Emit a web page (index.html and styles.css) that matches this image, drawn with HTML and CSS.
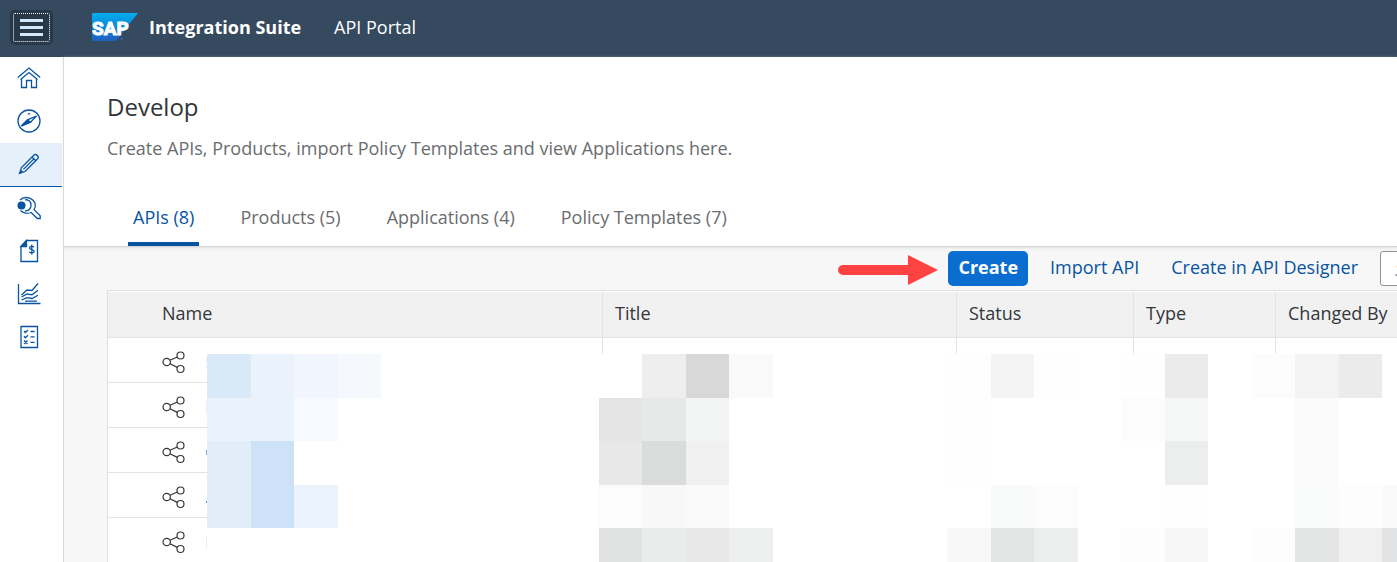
FILE: index.html
```
<!DOCTYPE html>
<html lang="en">
<head>
<meta charset="utf-8">
<title>Integration Suite - API Portal</title>
<link rel="stylesheet" href="styles.css">
</head>
<body>
<header class="shell">
  <button class="menu-button" type="button" aria-label="Menu"><span class="menu-bars"></span></button>
  <svg class="logo" viewBox="0 0 46 28" role="img" aria-label="SAP">
    <defs><linearGradient id="sap" x1="0" y1="0" x2="0" y2="1"><stop offset="0" stop-color="#00aeef"/><stop offset="1" stop-color="#1f5fbf"/></linearGradient></defs>
    <path fill="url(#sap)" d="M0 0h46L24 28H0z"/>
    <text class="logo-text" x="0" y="22">SAP</text>
    <circle cx="30" cy="26" r="1.500" fill="#2a62a8"/>
  </svg>
  <span class="product">Integration Suite</span>
  <span class="area">API Portal</span>
</header>
<div class="layout">
  <nav class="side" aria-label="Main">
    <a class="side-item" href="#home" aria-label="Home"><svg class="icon" viewBox="0 0 24 24"><path d="M.8 11.500 12 2l11.200 9.500M3.500 13.500 12 6.500l8.500 7M4.500 13v8.500H9.500V14.500h5v7h5V13"/></svg></a>
    <a class="side-item" href="#discover" aria-label="Discover"><svg class="icon" viewBox="0 0 24 24"><circle cx="12" cy="12" r="11"/><path d="M19.500 7 13.500 13.200 4.500 17 10.500 10.800z"/><path class="solid" d="M4.500 17 10.500 10.800l3 2.400z"/><path class="dot" d="m12 3.500 1.500 2h-3z"/></svg></a>
    <a class="side-item side-item-on" href="#develop" aria-label="Develop"><svg class="icon" viewBox="0 0 24 24"><path d="M2.500 21.500 4.500 15.500 17 3q1.500-1.200 3.300.4t.4 3.300L8.300 19.300zM15 5l3.800 3.800M6.400 17.400 16.900 6.900"/><path class="dot" d="m2.500 21.500 1.200-4 2.800 2.800z"/></svg></a>
    <a class="side-item" href="#configure" aria-label="Configure"><svg class="icon" viewBox="0 0 24 24"><path d="M3 4C6 .8 12 .5 15.800 4c3 3 3 6.700 1.200 9.500l6.200 6.200V22.500h-3l-6-6C10.500 18 6 17 3.500 14.500M8 3.800c4-.5 6 2 6 5.500s-2.500 6-6 5.500"/><circle class="dot" cx="4.500" cy="9.500" r="4"/></svg></a>
    <a class="side-item" href="#monetize" aria-label="Monetize"><svg class="icon" viewBox="0 0 24 24"><path d="M9.500 1.500H20.500v21H4V7.500z"/><path class="solid" d="M9.500 1.500v6H4z"/><path d="M17 8c-1-1-4.500-1-4.500 1s4.700 1.200 4.700 3.200-3.700 2-4.900.8M14.800 5.500v10"/></svg></a>
    <a class="side-item" href="#analyze" aria-label="Analyze"><svg class="icon" viewBox="0 0 24 24"><path d="M1.500 2v19.500h22"/><path d="m4.500 13 5.500-5 5 .5L21 1.500M4.500 15l5.500-3 5 .8 6-4.500M4.500 18l5.500-2.300 5 .8 6-3.200M8 19.200h12"/></svg></a>
    <a class="side-item" href="#test" aria-label="Test"><svg class="icon" viewBox="0 0 24 24"><path d="M4 1.500h16.500v21H4z"/><path d="m7 6 1.300 1.500L11 5M7 11.200l1.300 1.500 2.700-2.500M7 15.500l3.500 3.500M10.500 15.500 7 19M13.500 6.500h4M13.500 11.800h4M13.500 17.300h4"/></svg></a>
  </nav>
  <main class="main">
    <section class="page-head">
      <h1 class="title">Develop</h1>
      <p class="subtitle">Create APIs, Products, import Policy Templates and view Applications here.</p>
      <div class="tabs" role="tablist">
        <button class="tab tab-on" type="button" role="tab" aria-selected="true">APIs (8)</button>
        <button class="tab" type="button" role="tab" aria-selected="false">Products (5)</button>
        <button class="tab" type="button" role="tab" aria-selected="false">Applications (4)</button>
        <button class="tab" type="button" role="tab" aria-selected="false">Policy Templates (7)</button>
      </div>
    </section>
    <section class="content">
      <div class="sheet">
        <div class="toolbar">
          <svg class="arrow" viewBox="0 0 100 30" aria-hidden="true"><path d="M5 10h65V0l30 15-30 15V20H5a5 5 0 0 1 0-10z"/></svg>
          <button class="button button-main" type="button">Create</button>
          <button class="button" type="button">Import API</button>
          <button class="button" type="button">Create in API Designer</button>
          <input class="search" type="search" placeholder="Search" aria-label="Search">
        </div>
        <div class="table-area">
          <table class="apis">
            <colgroup><col class="col-name"><col class="col-title"><col class="col-status"><col class="col-type"><col></colgroup>
            <thead><tr><th class="name-head">Name</th><th>Title</th><th>Status</th><th>Type</th><th>Changed By</th></tr></thead>
            <tbody>
              <tr><td class="name-cell"><svg class="share" viewBox="0 0 24 24"><use href="#share"/></svg></td><td></td><td></td><td></td><td></td></tr>
              <tr><td class="name-cell"><svg class="share" viewBox="0 0 24 24"><use href="#share"/></svg></td><td></td><td></td><td></td><td></td></tr>
              <tr><td class="name-cell"><svg class="share" viewBox="0 0 24 24"><use href="#share"/></svg></td><td></td><td></td><td></td><td></td></tr>
              <tr><td class="name-cell"><svg class="share" viewBox="0 0 24 24"><use href="#share"/></svg></td><td></td><td></td><td></td><td></td></tr>
              <tr><td class="name-cell"><svg class="share" viewBox="0 0 24 24"><use href="#share"/></svg></td><td></td><td></td><td></td><td></td></tr>
            </tbody>
          </table>
          <svg class="mosaic" aria-hidden="true">
            <defs><g id="share"><circle cx="4.700" cy="12" r="3.700"/><circle cx="18.500" cy="5.500" r="3.500"/><circle cx="18.500" cy="19" r="3.500"/><path d="m8 10.300 7.300-3.300M8 13.700l7.300 3.700"/></g></defs>
            <rect x="1" y="0" width="100%" height="100%" fill="#fff"/>
            <g fill="#e6f0fa"><rect y="4" width="1" height="3"/><rect y="12" width="1" height="2"/><rect y="47" width="1" height="13"/><rect y="182" width="1" height="13"/></g>
            <rect y="96" width="1" height="5" fill="#7fb2e6"/><rect y="147" width="1" height="2" fill="#5b97d6"/>
            <rect x="1" y="0" width="44" height="44" fill="#d9e9f8"/><rect x="45" y="0" width="43" height="44" fill="#eaf3fb"/><rect x="88" y="0" width="44" height="44" fill="#f1f6fe"/><rect x="132" y="0" width="43" height="44" fill="#f5f9fe"/>
            <rect x="1" y="44" width="87" height="43" fill="#eaf3fb"/><rect x="88" y="44" width="44" height="43" fill="#f6faff"/>
            <rect x="1" y="87" width="44" height="87" fill="#e1edf9"/><rect x="45" y="87" width="43" height="87" fill="#cde2f7"/><rect x="88" y="131" width="44" height="43" fill="#ebf3fc"/>
            <rect x="436" y="0" width="44" height="44" fill="#eee"/><rect x="480" y="0" width="43" height="44" fill="#d8d8d8"/><rect x="523" y="0" width="44" height="44" fill="#f9f9f9"/>
            <rect x="393" y="44" width="43" height="43" fill="#e4e4e4"/><rect x="436" y="44" width="44" height="43" fill="#e7e9e8"/><rect x="480" y="44" width="43" height="43" fill="#f2f5f4"/>
            <rect x="393" y="87" width="43" height="44" fill="#e8e8e8"/><rect x="436" y="87" width="44" height="44" fill="#dadcdb"/><rect x="480" y="87" width="43" height="44" fill="#f0f0f0"/>
            <rect x="393" y="131" width="43" height="43" fill="#fcfcfc"/><rect x="436" y="131" width="44" height="43" fill="#f8f8f8"/><rect x="480" y="131" width="43" height="43" fill="#fafafa"/>
            <rect x="393" y="174" width="43" height="44" fill="#dfe2e1"/><rect x="436" y="174" width="44" height="44" fill="#eaeceb"/><rect x="480" y="174" width="43" height="44" fill="#e8e8e8"/><rect x="523" y="174" width="44" height="44" fill="#edf0ef"/>
            <rect x="741" y="0" width="44" height="131" fill="#fefefe"/><rect x="785" y="0" width="43" height="44" fill="#f4f4f4"/><rect x="828" y="0" width="44" height="44" fill="#fefefe"/>
            <rect x="785" y="131" width="43" height="43" fill="#f8fbfa"/><rect x="828" y="131" width="44" height="43" fill="#fcfcfc"/>
            <rect x="741" y="174" width="44" height="44" fill="#f8f8f8"/><rect x="785" y="174" width="43" height="44" fill="#e3e5e4"/><rect x="828" y="174" width="44" height="44" fill="#eceeed"/>
            <rect x="915" y="0" width="44" height="44" fill="#fefefe"/><rect x="959" y="0" width="43" height="44" fill="#ebebeb"/>
            <rect x="915" y="44" width="44" height="43" fill="#fcfcfc"/><rect x="959" y="44" width="43" height="43" fill="#f5f8f7"/><rect x="959" y="87" width="43" height="44" fill="#ebeeed"/><rect x="959" y="131" width="43" height="43" fill="#fefefe"/><rect x="915" y="174" width="44" height="44" fill="#fdfdfd"/><rect x="959" y="174" width="43" height="44" fill="#f7f7f7"/>
            <rect x="1046" y="0" width="43" height="44" fill="#fcfcfc"/><rect x="1089" y="0" width="44" height="44" fill="#f3f3f3"/><rect x="1133" y="0" width="43" height="44" fill="#ebebeb"/>
            <rect x="1089" y="44" width="44" height="87" fill="#fbfbfb"/><rect x="1089" y="131" width="44" height="43" fill="#fafcfb"/><rect x="1133" y="131" width="43" height="43" fill="#fdfdfd"/><rect x="1176" y="131" width="44" height="43" fill="#fafafa"/>
            <rect x="1046" y="174" width="43" height="44" fill="#fcfcfc"/><rect x="1089" y="174" width="44" height="44" fill="#e4e6e5"/><rect x="1133" y="174" width="43" height="44" fill="#f0f0f0"/><rect x="1176" y="174" width="44" height="44" fill="#e2e3e5"/>
          </svg>
        </div>
      </div>
    </section>
  </main>
</div>
</body>
</html>
```
FILE: styles.css
```
* { box-sizing: border-box; }
html, body { height: 100%; }
body {
  margin: 0;
  display: flex;
  flex-direction: column;
  overflow: hidden;
  background: #f7f7f7;
  color: #32363a;
  font-family: "Open Sans", "Noto Sans", sans-serif;
  font-size: 18px;
  line-height: 24px;
}
button, input { font: inherit; }

.shell {
  flex: none;
  display: flex;
  align-items: center;
  height: 57px;
  padding: 0 10px 3px;
  background: #354a5f;
  color: #fff;
}
.menu-button {
  display: grid;
  place-items: center;
  width: 43px;
  height: 35px;
  padding: 0;
  border: 0;
  border-radius: 5px;
  background: #283848;
  outline: 1px dotted #fff;
  outline-offset: -4px;
}
.menu-bars {
  width: 23px;
  height: 17px;
  border-top: 3px solid #d1e8ff;
  border-bottom: 3px solid #d1e8ff;
  background: linear-gradient(#d1e8ff, #d1e8ff) center / 100% 3px no-repeat;
}
.logo { width: 46px; height: 28px; margin-left: 39px; }
.logo-text {
  fill: #fff;
  stroke: #fff;
  stroke-width: 1px;
  font: bold 19px Roboto, sans-serif;
}
.product { margin-left: 11px; font-weight: 700; }
.area { margin-left: 33px; }

.layout { flex: 1; display: flex; min-height: 0; }
.side {
  flex: none;
  display: flex;
  flex-direction: column;
  width: 64px;
  padding-right: 1px;
  border-right: 1px solid #d9d9d9;
  background: #fff;
}
.side-item {
  display: grid;
  place-items: center;
  height: 43px;
  padding: 0 5px 1px 0;
}
.side-item-on { height: 44px; border-bottom: 1px solid #0854a0; background: #e5f0fa; }
.icon {
  width: 24px;
  height: 24px;
  fill: none;
  stroke: #0854a0;
  stroke-width: 1.3px;
}
.icon .solid { fill: #0854a0; }
.icon .dot { fill: #0854a0; stroke: none; }

.main { flex: 1; display: flex; flex-direction: column; min-width: 0; }
.page-head {
  z-index: 1;
  padding: 34px 43px 0;
  background: #fff;
  box-shadow: 0 1px 1px #d4d4d4, 0 2px 4px #e4e4e4;
}
.title { margin: 0; font-size: 24px; font-weight: 400; line-height: 32px; }
.subtitle { margin: 13px 0 0; color: #6a6d70; }
.tabs { display: flex; gap: 36px; margin-top: 39px; padding-left: 21px; }
.tab {
  height: 47px;
  padding: 0 5px 8px;
  border: 0;
  border-bottom: 4px solid transparent;
  background: none;
  color: #6a6d70;
  white-space: nowrap;
}
.tab-on {
  background: linear-gradient(#0854a0, #0854a0) bottom / 100% 4px no-repeat border-box;
  border-radius: 2px 2px 0 0;
  color: #0854a0;
}

.content { flex: 1; min-height: 0; padding-left: 43px; overflow: hidden; }
.sheet { width: calc(100% + 60px); }
.toolbar {
  display: flex;
  align-items: center;
  justify-content: flex-end;
  gap: 12px;
  height: 44px;
  padding-top: 1px;
}
.arrow { width: 100px; height: 30px; margin: 2px -2px 0 0; fill: #ff4242; }
.button {
  height: 35px;
  padding: 0 10px 3px;
  border: 0;
  border-radius: 5px;
  background: none;
  color: #0854a0;
  white-space: nowrap;
}
.button-main { background: #0a6ed1; color: #fff; font-weight: 700; }
.search {
  width: 77px;
  height: 35px;
  padding: 0 0 0 14px;
  border: 1px solid #89919a;
  border-radius: 3px;
  background: #fff;
}
.search::placeholder { color: #74777a; font-style: italic; }

.table-area { position: relative; }
.apis {
  width: 100%;
  border: 1px solid #e0e0e0;
  border-width: 1px 0 0 1px;
  border-spacing: 0;
  table-layout: fixed;
  background: #fff;
}
.col-name { width: 495px; }
.col-title { width: 354px; }
.col-status { width: 177px; }
.col-type { width: 142px; }
.apis th, .apis td {
  height: 45px;
  padding: 0 12px;
  border-right: 1px solid #e4e4e4;
  border-bottom: 1px solid #e4e4e4;
  text-align: left;
}
.apis th {
  height: 47px;
  padding-bottom: 3px;
  border-top: 1px solid #fff;
  background: #f1f1f1;
  font-weight: 400;
}
.apis .name-head, .apis .name-cell { padding-left: 54px; }
.share {
  display: block;
  width: 24px;
  height: 24px;
  margin-top: 4px;
  fill: none;
  stroke: #32363a;
  stroke-width: 1.2px;
}
.mosaic {
  position: absolute;
  top: 64px;
  right: 0;
  bottom: 0;
  left: 99px;
  width: calc(100% - 99px);
  height: calc(100% - 64px);
}
```
